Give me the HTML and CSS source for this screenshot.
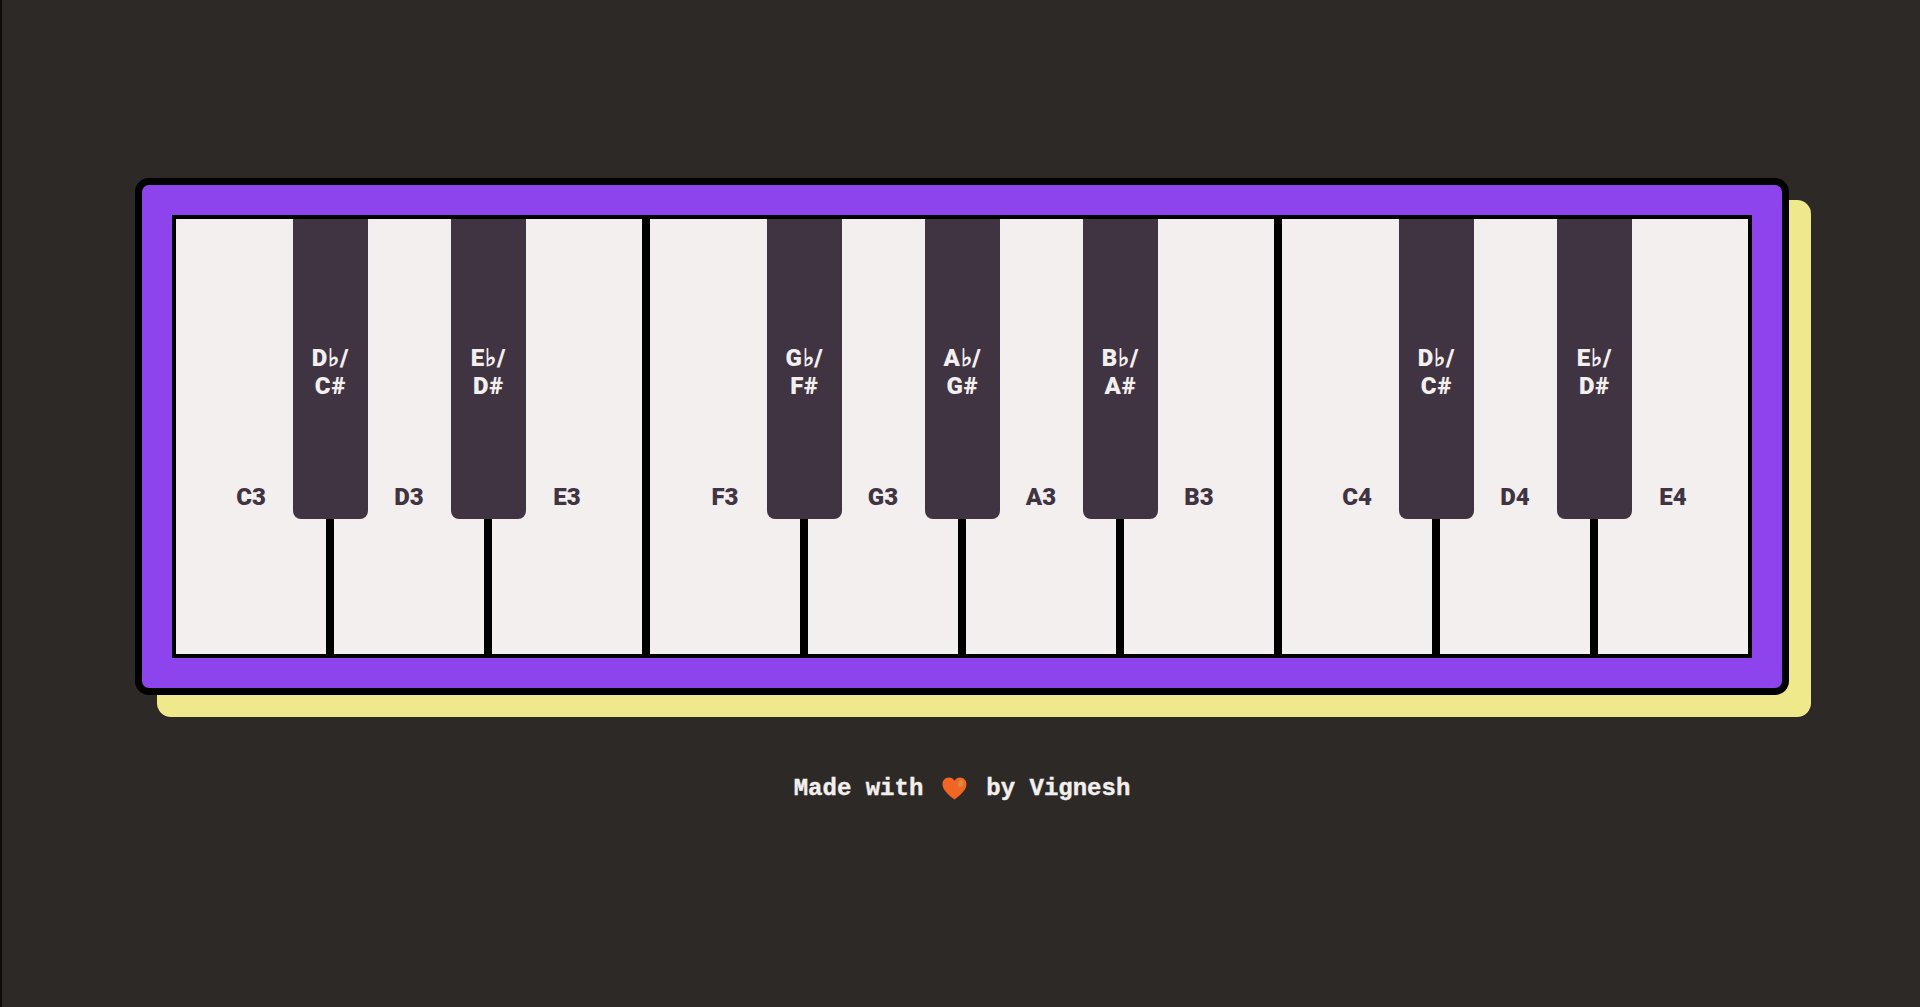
FILE: index.html
```html
<!DOCTYPE html>
<html lang="en">
<head>
    <meta charset="UTF-8">
    <meta name="viewport" content="width=device-width, initial-scale=1.0">
    <title>Piano</title>
    <link rel="stylesheet" href="styles.css">
</head>
<body>
    <div class="piano">
        <div class="keys">
            <div class="key">C3<div class="black-key">D♭/<br>C#</div></div>
            <div class="key">D3<div class="black-key">E♭/<br>D#</div></div>
            <div class="key">E3</div>
            <div class="key">F3<div class="black-key">G♭/<br>F#</div></div>
            <div class="key">G3<div class="black-key">A♭/<br>G#</div></div>
            <div class="key">A3<div class="black-key">B♭/<br>A#</div></div>
            <div class="key">B3</div>
            <div class="key">C4<div class="black-key">D♭/<br>C#</div></div>
            <div class="key">D4<div class="black-key">E♭/<br>D#</div></div>
            <div class="key">E4</div>
        </div>
    </div>
    <footer class="credit">
        <span>Made with</span>
        <svg class="heart" viewBox="0 0 24 22" width="25" height="23" aria-hidden="true">
            <path d="M12 21.5C8 18.2 0.5 13.2 0.5 6.8C0.5 3.2 3.2 0.5 6.6 0.5C8.9 0.5 10.9 1.7 12 3.6C13.1 1.7 15.1 0.5 17.4 0.5C20.8 0.5 23.5 3.2 23.5 6.8C23.5 13.2 16 18.2 12 21.5Z" fill="#f26522"/>
            <ellipse cx="18" cy="6.2" rx="2.6" ry="3.6" transform="rotate(28 18 6.2)" fill="#d98a3d"/>
        </svg>
        <span>by Vignesh</span>
    </footer>
</body>
</html>
```

FILE: styles.css
```css
body {
    margin: 0;
    height: 1007px;
    box-sizing: border-box;
    padding: 178px 0 0 2px;
    border-left: 2px solid #0d0c0b;
    background: #2d2926;
    display: flex;
    flex-direction: column;
    align-items: center;
    overflow: hidden;
}

.piano {
    padding: 30px;
    background: #8e44ec;
    border: 7px solid #000;
    border-radius: 14px;
    box-shadow: 22px 22px 0 0 #f0e98c;
}

.keys {
    display: flex;
    gap: 8px;
    background: #000;
    border: 4px solid #000;
}

.key {
    position: relative;
    width: 150px;
    height: 435px;
    box-sizing: border-box;
    padding-bottom: 143px;
    display: flex;
    align-items: flex-end;
    justify-content: center;
    background: #f3efee;
    color: #403443;
    font-family: Roboto, sans-serif;
    font-size: 24px;
    font-weight: 900;
}

.black-key {
    position: absolute;
    top: 0;
    left: 117px;
    z-index: 1;
    width: 75px;
    height: 300px;
    box-sizing: border-box;
    padding-top: 5px;
    display: flex;
    align-items: center;
    justify-content: center;
    text-align: center;
    background: #403443;
    color: #f3efee;
    letter-spacing: 0.8px;
    border-radius: 0 0 8px 8px;
}

.credit {
    margin-top: 80px;
    display: flex;
    align-items: center;
    gap: 19px;
    color: #f3efee;
    font-family: "Liberation Mono", monospace;
    font-size: 24px;
    font-weight: 700;
    -webkit-text-stroke: 0.4px #f3efee;
}
```
